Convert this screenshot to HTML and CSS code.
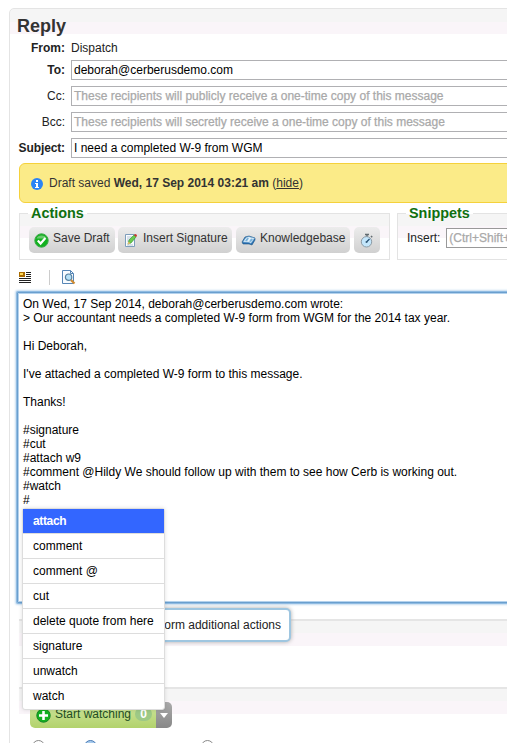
FILE: index.html
```html
<!DOCTYPE html>
<html lang="en">
<head>
<meta charset="utf-8">
<title>Reply</title>
<link rel="stylesheet" href="styles.css">
</head>
<body>
<main class="panel">
  <h1>Reply</h1>
  <div class="fields">
    <b class="label">From:</b><span class="plain">Dispatch</span>
    <b class="label">To:</b><div class="input">deborah@cerberusdemo.com</div>
    <span class="label">Cc:</span><div class="input hint">These recipients will publicly receive a one-time copy of this message</div>
    <span class="label">Bcc:</span><div class="input hint">These recipients will secretly receive a one-time copy of this message</div>
    <b class="label subject">Subject:</b><div class="input">I need a completed W-9 from WGM</div>
  </div>
  <div class="notice">
    <svg width="12" height="12" viewBox="0 0 12 12"><circle cx="6" cy="6" r="6" fill="#2b84f5"/><path d="M5 2h2v2H5zM4 5h3v4h1v1H4V9h1V6H4z" fill="#fff"/></svg>
    <span>Draft saved <b>Wed, 17 Sep 2014 03:21 am</b> (<u>hide</u>)</span>
  </div>
  <div class="groups">
    <section class="group actions">
      <h2>Actions</h2>
      <div class="row">
        <div class="button save"><svg width="15" height="15" viewBox="0 0 15 15"><circle cx="7.5" cy="7.5" r="6.7" fill="#12b11f" stroke="#3da94a"/><path d="M2.5 5.5a5.2 4 0 0 1 10 0z" fill="#6cc971"/><path d="M3.8 7.5l2.8 3 4.8-5.5" fill="none" stroke="#fff" stroke-width="2.2"/></svg><span>Save Draft</span></div>
        <div class="button sign"><svg width="15" height="15" viewBox="0 0 15 15"><path d="M2.5 1.5h9v12h-9z" fill="#f9fcff" stroke="#7d9dbb"/><path d="M4 4h5M4 6h4M4 8h2M4 12h6" stroke="#b5c5d5"/><path d="M5 11l1-4 5-5 2 2-5 6z" fill="#6bcb4e" stroke="#31902a" stroke-width=".6"/><path d="M11 2l1-1q2 0 2 2l-1 1z" fill="#c8372c"/><path d="M4.5 11.5l1-3 2 2z" fill="#e7b96b"/></svg><span>Insert Signature</span></div>
        <div class="button know"><svg width="15" height="15" viewBox="0 0 15 15"><path d="M1 9l3-5 4-1 6 2v2l-3 5-3-1-6 0z" fill="#2870b4" stroke="#205581" stroke-width=".6"/><path d="M2 9l3-4.500 3-.8 5.500 1.500-3.500 5-2.500-1z" fill="#e7f3fb" stroke="#7aaed5" stroke-width=".6"/><path d="M4 8l2-3 2 .3-2 3zM8 8.500l2-3 2 .5-2 3z" fill="#78b2db"/></svg><span>Knowledgebase</span></div>
        <div class="button clock"><svg width="15" height="15" viewBox="0 0 15 15"><path d="M6 1.500h4M8 1v3M12 3l1.200 1.200" stroke="#616b70" stroke-width="1.500"/><circle cx="7.500" cy="8.800" r="5.200" fill="#c3e6fb" stroke="#8b9aa4"/><path d="M7.500 9l3-3" stroke="#234e73" stroke-width="1.300"/><circle cx="7.500" cy="9" r="1" fill="#375d78"/></svg></div>
      </div>
    </section>
    <section class="group snippets">
      <h2>Snippets</h2>
      <div class="row"><span>Insert:</span><div class="input hint">(Ctrl+Shift+I)</div></div>
    </section>
  </div>
  <div class="toolbar">
    <svg width="13" height="13" viewBox="0 0 13 13"><path d="M0 1h6v5H0z" fill="#a96b00"/><path d="M1 2h3v2H1z" fill="#ffd955"/><path d="M7 1.500h5M7 3.500h5M7 5.500h5M0 7.500h12M0 9.500h12M0 11.500h12" stroke="#222"/></svg>
    <i></i>
    <svg width="14" height="15" viewBox="0 0 14 15"><path d="M.5.5h8l3 3v10H.5z" fill="#f7fbff" stroke="#5686b6"/><path d="M8.500.5v3h3" fill="none" stroke="#5686b6"/><circle cx="6.600" cy="7.200" r="3.200" fill="#b6e0f6" stroke="#557f9f" stroke-width="1.200"/><path d="M9 10l3.500 3.500" stroke="#cf8b32" stroke-width="2.200"/></svg>
  </div>
  <div class="editor"><div>On Wed, 17 Sep 2014, deborah@cerberusdemo.com wrote:</div><div>&gt; Our accountant needs a completed W-9 form from WGM for the 2014 tax year.</div><br><div>Hi Deborah,</div><br><div>I've attached a completed W-9 form to this message.</div><br><div>Thanks!</div><br><div>#signature</div><div>#cut</div><div>#attach w9</div><div>#comment @Hildy We should follow up with them to see how Cerb is working out.</div><div>#watch</div><div>#</div>
    <ul class="menu">
      <li class="active">attach</li><li>comment</li><li>comment @</li><li>cut</li><li>delete quote from here</li><li>signature</li><li>unwatch</li><li>watch</li>
    </ul>
    <div class="tooltip">perform additional actions</div>
  </div>
  <section class="block first"></section>
  <section class="block">
    <div class="watch"><div class="main"><svg width="15" height="15" viewBox="0 0 15 15"><circle cx="7.500" cy="7.500" r="6.700" fill="#12b11f" stroke="#168527"/><path d="M7.500 3v9M3 7.500h9" stroke="#fff" stroke-width="2.600"/></svg><span>Start watching</span><span class="count">0</span></div><div class="drop"><svg width="8" height="5" viewBox="0 0 8 5"><path d="M0 0h8L4 5z" fill="#fff"/></svg></div></div>
    <div class="radios"><span class="radio"></span><span>open</span><span class="radio on"></span><span>waiting for reply</span><span class="radio last"></span><span>closed</span></div>
  </section>
</main>
</body>
</html>
```
FILE: styles.css
```css
* { box-sizing: border-box; }
html { overflow: hidden; }
body { margin: 8px 0 0 9px; height: 735px; overflow: hidden; background: #fff; color: #222; font: 12px/14px "Liberation Sans", Arial, sans-serif; white-space: nowrap; }
svg { display: block; flex: none; }
.panel { width: 540px; height: 780px; border: 1px solid #e4e4e4; border-radius: 5px 0 0 0; background: linear-gradient(#f5f5f5 0 13px, #faf5f9 13px 25px, #fff 25px); padding: 8px 0 0 9px; }
h1 { margin: 0 0 0 -2px; font-size: 18px; line-height: 18px; color: #333; }
.fields { display: grid; grid-template-columns: 46px 1fr; column-gap: 6px; row-gap: 6px; margin-top: 4px; }
.fields > * { height: 20px; line-height: 20px; }
.fields > :nth-child(-n+2) { margin-top: 1px; height: 14px; line-height: 16px; }
.label { text-align: right; display: flex; justify-content: flex-end; }
.subject { letter-spacing: -.12px; }
.input { border: 1px solid #b0b0b3; background: #fff; color: #000; padding-left: 2px; }
.fields .input { line-height: 18px; }
.hint { color: #a9a9a9; -webkit-text-stroke: .25px #a9a9a9; }
.notice { display: flex; align-items: center; height: 40px; margin-top: 5px; padding-left: 11px; gap: 6px; border: 1px solid #f5d13b; border-radius: 6px; background: #fbeb88; color: #333; }
.notice svg { margin-top: 2px; }
.groups { display: flex; gap: 7px; margin-top: 10px; }
.group { height: 47px; border: 1px solid #e3e3e3; background: linear-gradient(#f5f5f5 0 12px, #faf5f9 12px 24px, #fff 24px); }
.actions { width: 371px; padding-left: 9px; }
.snippets { width: 150px; padding-left: 9px; }
h2 { width: max-content; margin: -9px 0 0 -1px; padding: 0 3px; background: linear-gradient(#fff 9px, #f5f5f5 9px); color: #107010; font-size: 14.4px; line-height: 17px; }
.row { display: flex; align-items: center; height: 26px; margin-top: 5px; }
.snippets .row { height: 20px; margin-top: 6px; gap: 6px; }
.snippets .input { height: 20px; line-height: 18px; width: 100px; border-color: #999; }
.button { display: flex; align-items: center; height: 26px; padding-left: 5px; gap: 4px; border-radius: 5px; background: linear-gradient(#ececec, #d0d0d0); color: #333; }
.button span { margin-top: -5px; }
.save { width: 86px; margin-right: 3px; }
.sign { width: 114px; margin-right: 4px; gap: 5px; }
.know { width: 114px; margin-right: 4px; }
.clock { width: 26px; }
.toolbar { display: flex; align-items: center; height: 16px; margin-top: 9px; }
.toolbar i { width: 1px; height: 15px; margin: 0 12px 0 17px; background: #ccc; }
.editor { position: relative; height: 311px; margin: 7px 0 0 -2px; padding: 4px 0 0 5px; border: 1px solid #6a9fce; box-shadow: 0 0 0 1px #8fbbe2, 0 0 2px 2px #c5dcf0, inset 0 0 0 1px #b4d2ed; background: #fff; color: #000; border-radius: 1px; }
.menu { position: absolute; z-index: 2; left: 4px; top: 215px; width: 143px; margin: 0; padding: 0; list-style: none; background: #fff; border: 1px solid #ddd; border-radius: 3px; box-shadow: 0 0 4px rgba(0,0,0,.12); }
.menu li { height: 25px; padding: 0 10px; line-height: 24px; border-bottom: 1px solid #ddd; }
.menu li:last-child { border: 0; }
.menu .active { background: #36f; color: #fff; font-weight: bold; letter-spacing: -.35px; }
.tooltip { position: absolute; z-index: 1; right: 256px; top: 315px; width: 160px; height: 34px; padding-right: 8px; text-align: right; line-height: 30px; border: 2px solid #9fc6e0; border-radius: 5px; background: #fff; box-shadow: 0 0 4px #aaa; color: #222; }
.block { height: 61px; border-top: 2px solid #e5e5e5; background: linear-gradient(#f5f5f5 0 12px, #faf5f9 12px 25px, #fff 25px); }
.block.first { margin-top: 16px; margin-bottom: 7px; }
.watch { display: flex; width: 142px; height: 26px; margin: 13px 0 0 11px; border-radius: 5px; overflow: hidden; }
.main { display: flex; align-items: center; width: 126px; padding-left: 6px; gap: 4px; background: linear-gradient(#d0e7a0, #b2d26c); color: #234e23; }
.main > span { margin-top: -3px; }
.main .count { width: 17px; text-align: center; border-radius: 8px; background: #9dc986; color: #fff; font-weight: bold; }
.drop { display: flex; flex: 1; align-items: center; justify-content: center; background: linear-gradient(#aaa, #888); }
.radios { display: flex; align-items: flex-start; gap: 3px; margin: 12px 0 0 13px; }
.radios > span:not(.radio) { margin-top: 2px; }
.radio { width: 13px; height: 13px; border: 1px solid #888; border-radius: 50%; }
.radio.on { margin-left: 6px; border-color: #4779b4; background: #a8cbed; }
.radio.last { margin-left: 14px; }
```
